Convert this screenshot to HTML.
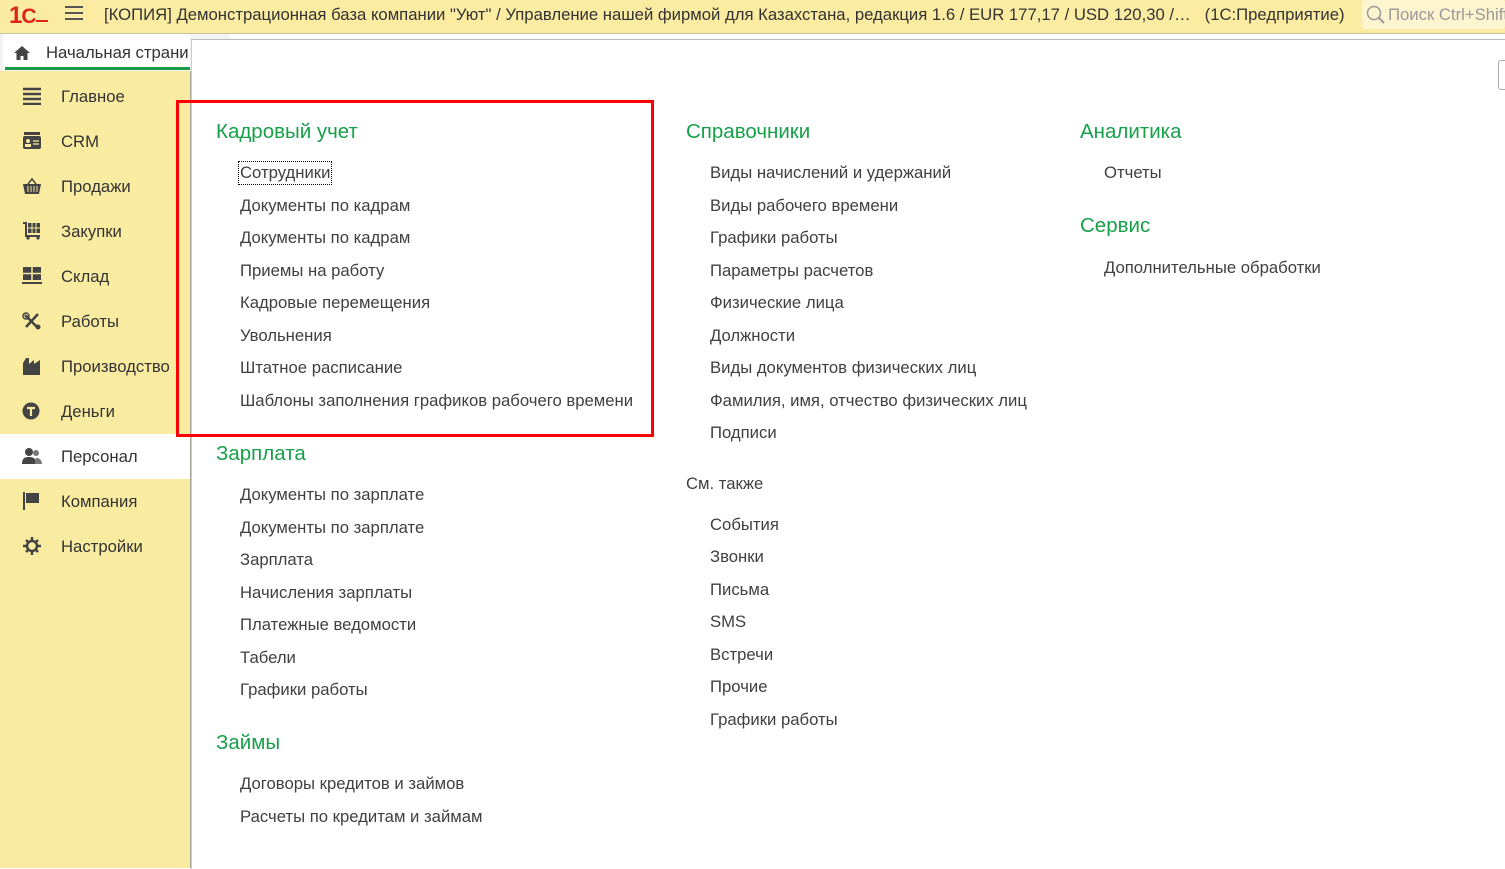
<!DOCTYPE html><html><head><meta charset="utf-8"><style>
body{margin:0;width:1505px;height:868px;overflow:hidden;background:#fff;font-family:"Liberation Sans",Arial,sans-serif;position:relative}
.a{position:absolute;white-space:nowrap}
.top{left:0;top:0;width:1505px;height:33px;background:#fbeca2;border-bottom:1px solid #c9c2a0}
.side{left:0;top:71px;width:190px;height:797px;background:#f9eca1;border-right:1px solid #a8a69a}
.si{position:absolute;left:61px;font-size:16.7px;color:#333;transform:translateY(-45%)}
.ic{position:absolute;left:22px;transform:translateY(-50%)}
.h{font-size:20.5px;color:#17a04a;transform:translateY(-45%)}
.l{font-size:16.7px;color:#404040;transform:translateY(-45%)}
</style></head><body>
<div class="a top"></div>
<div class="a" style="left:9px;top:2px;font-size:24px;font-weight:bold;color:#e2231a;letter-spacing:-1px">1<span style="font-size:21px">С</span></div>
<div class="a" style="left:36px;top:20px;width:12px;height:2px;background:#e2231a"></div>
<div class="a" style="left:65px;top:6px;width:18px;height:2px;background:#555;box-shadow:0 6px 0 #555,0 12px 0 #555"></div>
<div class="a" style="left:104px;top:5px;font-size:16.7px;color:#333">[КОПИЯ] Демонстрационная база компании "Уют" / Управление нашей фирмой для Казахстана, редакция 1.6 / EUR 177,17 / USD 120,30 /…&nbsp;&nbsp;&nbsp;(1С:Предприятие)</div>
<div class="a" style="left:1362px;top:0;width:143px;height:29px;background:#fdf5d0;border-radius:3px"></div>
<svg class="a" style="left:1366px;top:5px" width="20" height="20"><circle cx="8" cy="8" r="6.5" fill="none" stroke="#999" stroke-width="1.5"/><line x1="13" y1="13" x2="18" y2="18" stroke="#999" stroke-width="2"/></svg>
<div class="a" style="left:1388px;top:5px;font-size:16.7px;color:#9a9a9a">Поиск Ctrl+Shift</div>
<div class="a" style="left:0;top:34px;width:230px;height:37px;background:#f3f3f3"></div>
<div class="a" style="left:3px;top:34px;width:187px;height:36px;background:#fff"></div>
<div class="a" style="left:5px;top:67px;width:185px;height:3px;background:#1b9a48"></div>
<svg class="a" style="left:13px;top:45px" width="18" height="16"><path d="M9 1L1 8h2.5v7h4v-4h3v4h4V8H17z" fill="#444"/></svg>
<div class="a" style="left:46px;top:43px;font-size:16.7px;color:#333;width:143px;overflow:hidden">Начальная страница</div>
<div class="a" style="left:191px;top:39px;width:1314px;height:829px;background:#fff;border-top:1px solid #bbb;border-left:1px solid #ccc"></div>
<div class="a" style="left:1498px;top:60px;width:10px;height:28px;border:1px solid #aaa;border-radius:3px"></div>
<div class="a side"></div>
<div class="a" style="left:0;top:434px;width:190px;height:45px;background:#fff"></div>
<div class="a" style="left:0;top:0;width:190px;height:868px">
<svg class="ic" style="top:96px" width="20" height="18"><path d="M1 2h18M1 7h18M1 12h18M1 17h18" stroke="#444" stroke-width="2.5"/></svg><div class="si" style="top:96px">Главное</div>
<svg class="ic" style="top:141px" width="20" height="18"><rect x="1" y="4" width="18" height="13" rx="2" fill="#444"/><rect x="2" y="0" width="16" height="3" fill="#444"/><circle cx="6" cy="9" r="2" fill="#f9eca1"/><rect x="3" y="12" width="6" height="3" fill="#f9eca1"/><path d="M11 9h6M11 12h6" stroke="#f9eca1" stroke-width="1.3"/></svg><div class="si" style="top:141px">CRM</div>
<svg class="ic" style="top:186px" width="20" height="18"><path d="M1 7h18l-2 10H3z" fill="#444"/><path d="M6 7l4-5 4 5" fill="none" stroke="#444" stroke-width="1.5"/><path d="M6 9v6M9 9v6M12 9v6M15 9v6" stroke="#f9eca1"/></svg><div class="si" style="top:186px">Продажи</div>
<svg class="ic" style="top:231px" width="20" height="18"><path d="M1 1h3v13h14" fill="none" stroke="#444" stroke-width="2"/><rect x="6" y="1" width="12" height="10" fill="#444"/><path d="M6 6h12M10 1v10M14 1v10" stroke="#f9eca1"/><circle cx="6" cy="16" r="1.6" fill="#444"/><circle cx="16" cy="16" r="1.6" fill="#444"/></svg><div class="si" style="top:231px">Закупки</div>
<svg class="ic" style="top:276px" width="20" height="18"><rect x="1" y="0" width="18" height="13" fill="#444"/><path d="M1 6.5h18M10 0v13" stroke="#f9eca1" stroke-width="1.5"/><rect x="0" y="15" width="20" height="2" fill="#444"/></svg><div class="si" style="top:276px">Склад</div>
<svg class="ic" style="top:321px" width="20" height="18"><path d="M3 3l13 13M16 2L4 15" stroke="#444" stroke-width="2.5"/><circle cx="4" cy="4" r="3" fill="none" stroke="#444" stroke-width="1.5"/><circle cx="16" cy="15" r="2.5" fill="#444"/></svg><div class="si" style="top:321px">Работы</div>
<svg class="ic" style="top:366px" width="20" height="18"><path d="M1 18V6l3-5h3v6l5-4v4l6-4v15z" fill="#444"/></svg><div class="si" style="top:366px">Производство</div>
<svg class="ic" style="top:411px" width="20" height="18"><circle cx="9" cy="9" r="8.5" fill="#444"/><path d="M5 6h8M9 6v8" stroke="#f9eca1" stroke-width="2.2"/></svg><div class="si" style="top:411px">Деньги</div>
<svg class="ic" style="top:456px" width="20" height="18"><circle cx="7" cy="5" r="4" fill="#444"/><path d="M0 17c0-6 3-7 7-7s7 1 7 7z" fill="#444"/><circle cx="14" cy="6" r="3" fill="#777"/><path d="M13 17c0-5 0-6 2-6s5 2 5 6z" fill="#777"/></svg><div class="si" style="top:456px">Персонал</div>
<svg class="ic" style="top:501px" width="20" height="18"><path d="M2 0v18" stroke="#444" stroke-width="2"/><path d="M4 1h13v10H4z" fill="#444"/></svg><div class="si" style="top:501px">Компания</div>
<svg class="ic" style="top:546px" width="20" height="20"><circle cx="10" cy="10" r="5" fill="none" stroke="#444" stroke-width="2.5"/><path d="M10 1v4M10 15v4M1 10h4M15 10h4M4 4l2.5 2.5M13.5 13.5L16 16M16 4l-2.5 2.5M4 16l2.5-2.5" stroke="#444" stroke-width="2.5"/></svg><div class="si" style="top:546px">Настройки</div>
</div>
<div class="a" style="left:176px;top:100px;width:472px;height:331px;border:3px solid #f00"></div>
<div class="a h" style="left:216px;top:131px">Кадровый учет</div>
<div class="a" style="left:238px;top:161px;width:92px;height:22px;border:1px dotted #000"></div>
<div class="a l" style="left:240px;top:172px">Сотрудники</div>
<div class="a l" style="left:240px;top:205px">Документы по кадрам</div>
<div class="a l" style="left:240px;top:237px">Документы по кадрам</div>
<div class="a l" style="left:240px;top:270px">Приемы на работу</div>
<div class="a l" style="left:240px;top:302px">Кадровые перемещения</div>
<div class="a l" style="left:240px;top:335px">Увольнения</div>
<div class="a l" style="left:240px;top:367px">Штатное расписание</div>
<div class="a l" style="left:240px;top:400px">Шаблоны заполнения графиков рабочего времени</div>
<div class="a h" style="left:216px;top:453px">Зарплата</div>
<div class="a l" style="left:240px;top:494px">Документы по зарплате</div>
<div class="a l" style="left:240px;top:527px">Документы по зарплате</div>
<div class="a l" style="left:240px;top:559px">Зарплата</div>
<div class="a l" style="left:240px;top:592px">Начисления зарплаты</div>
<div class="a l" style="left:240px;top:624px">Платежные ведомости</div>
<div class="a l" style="left:240px;top:657px">Табели</div>
<div class="a l" style="left:240px;top:689px">Графики работы</div>
<div class="a h" style="left:216px;top:742px">Займы</div>
<div class="a l" style="left:240px;top:783px">Договоры кредитов и займов</div>
<div class="a l" style="left:240px;top:816px">Расчеты по кредитам и займам</div>
<div class="a h" style="left:686px;top:131px">Справочники</div>
<div class="a l" style="left:710px;top:172px">Виды начислений и удержаний</div>
<div class="a l" style="left:710px;top:205px">Виды рабочего времени</div>
<div class="a l" style="left:710px;top:237px">Графики работы</div>
<div class="a l" style="left:710px;top:270px">Параметры расчетов</div>
<div class="a l" style="left:710px;top:302px">Физические лица</div>
<div class="a l" style="left:710px;top:335px">Должности</div>
<div class="a l" style="left:710px;top:367px">Виды документов физических лиц</div>
<div class="a l" style="left:710px;top:400px">Фамилия, имя, отчество физических лиц</div>
<div class="a l" style="left:710px;top:432px">Подписи</div>
<div class="a l" style="left:686px;top:483px">См. также</div>
<div class="a l" style="left:710px;top:524px">События</div>
<div class="a l" style="left:710px;top:556px">Звонки</div>
<div class="a l" style="left:710px;top:589px">Письма</div>
<div class="a l" style="left:710px;top:621px">SMS</div>
<div class="a l" style="left:710px;top:654px">Встречи</div>
<div class="a l" style="left:710px;top:686px">Прочие</div>
<div class="a l" style="left:710px;top:719px">Графики работы</div>
<div class="a h" style="left:1080px;top:131px">Аналитика</div>
<div class="a l" style="left:1104px;top:172px">Отчеты</div>
<div class="a h" style="left:1080px;top:225px">Сервис</div>
<div class="a l" style="left:1104px;top:267px">Дополнительные обработки</div>
</body></html>
